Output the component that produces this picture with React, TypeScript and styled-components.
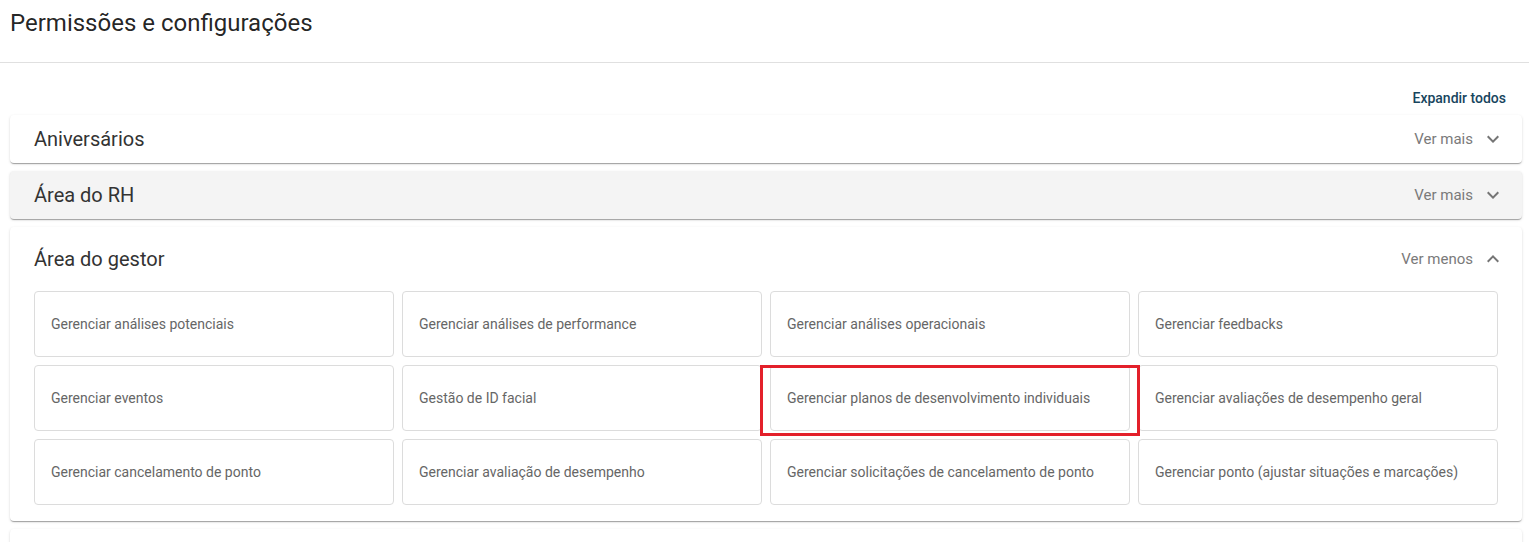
import React from "react";
import styled, { createGlobalStyle } from "styled-components";

const GlobalStyle = createGlobalStyle`
  html, body {
    margin: 0;
    padding: 0;
    background: #ffffff;
    font-family: Roboto, "Helvetica Neue", Arial, sans-serif;
    overflow: hidden;
  }
  * { box-sizing: border-box; }
`;

const Page = styled.div`
  width: 1529px;
  height: 542px;
  overflow: hidden;
  background: #ffffff;
`;

const TopBar = styled.header`
  height: 63px;
  padding: 7px 10px 0;
  border-bottom: 1px solid #e0e0e0;
`;

const PageTitle = styled.h1`
  margin: 0;
  font-size: 24px;
  font-weight: 400;
  line-height: 32px;
  color: rgba(0, 0, 0, 0.87);
`;

const Content = styled.main`
  padding: 0 7px 0 10px;
`;

const ToolRow = styled.div`
  display: flex;
  justify-content: flex-end;
  align-items: center;
  height: 52px;
  padding: 17px 16px 0 0;
`;

const ExpandAll = styled.button`
  border: 0;
  background: none;
  padding: 0;
  font-family: inherit;
  font-size: 14px;
  font-weight: 500;
  color: #17455e;
  cursor: pointer;
`;

const List = styled.div`
  display: flex;
  flex-direction: column;
  gap: 8px;
`;

const Card = styled.section<{ $hover?: boolean }>`
  background: ${(p) => (p.$hover ? "#f4f4f4" : "#ffffff")};
  border-radius: 4px;
  box-shadow: 0px 2px 1px -1px rgba(0, 0, 0, 0.2),
    0px 1px 1px 0px rgba(0, 0, 0, 0.14), 0px 1px 3px 0px rgba(0, 0, 0, 0.12);
`;

const Summary = styled.div<{ $open?: boolean }>`
  display: flex;
  align-items: center;
  height: ${(p) => (p.$open ? "64px" : "48px")};
  padding: 0 17px 0 24px;
  gap: 8px;
`;

const CardTitle = styled.h2`
  flex: 1;
  margin: 0;
  font-size: 20px;
  font-weight: 400;
  color: #333333;
`;

const Toggle = styled.span`
  font-size: 15px;
  color: #7a7a7a;
`;

const Chevron = styled.svg<{ $up?: boolean }>`
  width: 24px;
  height: 24px;
  fill: #757575;
  transform: ${(p) => (p.$up ? "rotate(180deg)" : "none")};
`;

const Grid = styled.div`
  display: grid;
  grid-template-columns: repeat(4, 1fr);
  grid-auto-rows: 66px;
  gap: 8px;
  padding: 0 24px 16px 24px;
`;

const Permission = styled.div`
  position: relative;
  display: flex;
  align-items: center;
  padding: 0 16px;
  border: 1px solid #dcdcdc;
  border-radius: 4px;
  font-size: 14px;
  color: #666666;
  background: #ffffff;
`;

const Highlight = styled.span`
  position: absolute;
  z-index: 1;
  left: -11px;
  right: -11px;
  top: -1px;
  bottom: -6px;
  border: 3px solid #e3202a;
  pointer-events: none;
`;

const Stub = styled(Card)`
  height: 48px;
`;

const ExpandIcon = ({ up }: { up?: boolean }) => (
  <Chevron $up={up} viewBox="0 0 24 24">
    <path d="M16.59 8.59 12 13.17 7.41 8.59 6 10l6 6 6-6z" />
  </Chevron>
);

const permissions = [
  "Gerenciar análises potenciais",
  "Gerenciar análises de performance",
  "Gerenciar análises operacionais",
  "Gerenciar feedbacks",
  "Gerenciar eventos",
  "Gestão de ID facial",
  "Gerenciar planos de desenvolvimento individuais",
  "Gerenciar avaliações de desempenho geral",
  "Gerenciar cancelamento de ponto",
  "Gerenciar avaliação de desempenho",
  "Gerenciar solicitações de cancelamento de ponto",
  "Gerenciar ponto (ajustar situações e marcações)",
];

const marked = "Gerenciar planos de desenvolvimento individuais";

export default function App() {
  return (
    <Page>
      <GlobalStyle />
      <TopBar>
        <PageTitle>Permissões e configurações</PageTitle>
      </TopBar>
      <Content>
        <ToolRow>
          <ExpandAll>Expandir todos</ExpandAll>
        </ToolRow>
        <List>
          <Card>
            <Summary>
              <CardTitle>Aniversários</CardTitle>
              <Toggle>Ver mais</Toggle>
              <ExpandIcon />
            </Summary>
          </Card>
          <Card $hover>
            <Summary>
              <CardTitle>Área do RH</CardTitle>
              <Toggle>Ver mais</Toggle>
              <ExpandIcon />
            </Summary>
          </Card>
          <Card>
            <Summary $open>
              <CardTitle>Área do gestor</CardTitle>
              <Toggle>Ver menos</Toggle>
              <ExpandIcon up />
            </Summary>
            <Grid>
              {permissions.map((p) => (
                <Permission key={p}>
                  {p}
                  {p === marked && <Highlight />}
                </Permission>
              ))}
            </Grid>
          </Card>
          <Stub />
        </List>
      </Content>
    </Page>
  );
}
